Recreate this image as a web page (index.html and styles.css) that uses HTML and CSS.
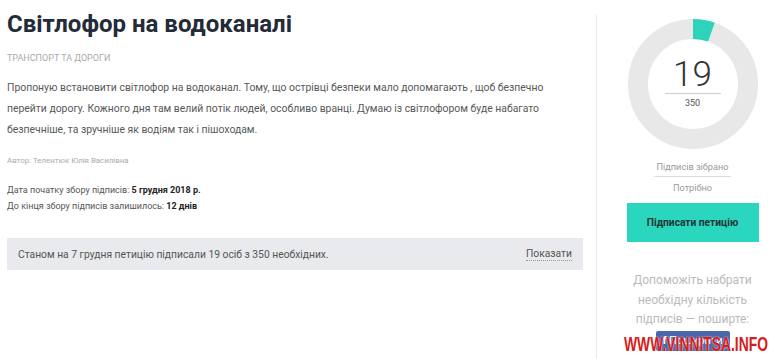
FILE: index.html
```html
<!DOCTYPE html>
<html lang="uk">
  <head>
    <meta charset="UTF-8" />
    <meta name="viewport" content="width=device-width, initial-scale=1.0" />
    <title>Світлофор на водоканалі</title>
    <link rel="stylesheet" href="styles.css">
  </head>
  <body>
    <div class="page">
      <main class="petition">
        <h1>Світлофор на водоканалі</h1>
        <div class="category">Транспорт та дороги</div>

        <p class="text">Пропоную встановити світлофор на водоканал. Тому, що острівці безпеки мало допомагають , щоб безпечно перейти дорогу. Кожного дня там велий потік людей, особливо вранці. Думаю із світлофором буде набагато безпечніше, та зручніше як водіям так і пішоходам.</p>

        <div class="author">Автор: Телентюк Юлія Василівна</div>

        <div class="dates">
          <div>Дата початку збору підписів: <b>5 грудня 2018 р.</b></div>
          <div>До кінця збору підписів залишилось: <b>12 днів</b></div>
        </div>

        <div class="status">
          <span>Станом на 7 грудня петицію підписали 19 осіб з 350 необхідних.</span>
          <a class="show" href="#">Показати</a>
        </div>
      </main>

      <aside class="sidebar">
        <div class="counter">
          <svg class="ring" width="130" height="130" viewBox="0 0 130 130">
            <circle cx="65" cy="65" r="55" fill="none" stroke="#e8e8e8" stroke-width="20"></circle>
            <!-- 19 of 350 -->
            <circle cx="65" cy="65" r="55" fill="none" stroke="#2ed3bb" stroke-width="20"
              stroke-dasharray="18.8 400" transform="rotate(-90 65 65)"></circle>
          </svg>
          <div class="count">
            <div class="count-now">19</div>
            <div class="count-need">350</div>
          </div>
        </div>

        <div class="label label-line">Підписів зібрано</div>
        <div class="label">Потрібно</div>

        <button class="sign">Підписати петицію</button>

        <p class="help">Допоможіть набрати необхідну кількість підписів — поширте:</p>

        <a class="fb" href="#"><span class="fb-f">f</span> Поширити</a>
      </aside>
    </div>

    <div class="watermark">WWW.VINNITSA.INFO</div>
  </body>
</html>
```

FILE: styles.css
```css
body {
  margin: 0;
  font-family: Roboto, "Liberation Sans", sans-serif;
  color: #555;
  background: #fff;
  overflow: hidden;
}
.page {
  display: flex;
  width: 780px;
}
.petition {
  flex: none;
  width: 576px;
  padding-left: 7px;
  margin-right: 13px;
}
h1 {
  margin: 7px 0 0;
  font-size: 24px;
  line-height: 34px;
  font-weight: 700;
  color: #242b38;
}
.category {
  margin-top: 12px;
  font-size: 9px;
  text-transform: uppercase;
  color: #aaa;
}
.text {
  margin: 14px 0 0;
  font-size: 10.4px;
  line-height: 21px;
  color: #585858;
}
.author {
  margin-top: 16px;
  font-size: 7.9px;
  color: #aaa;
}
.dates {
  margin-top: 17px;
  font-size: 9px;
  line-height: 16px;
  color: #555;
}
.dates b {
  color: #222;
}
.status {
  display: flex;
  justify-content: space-between;
  align-items: center;
  margin-top: 24px;
  height: 32px;
  padding: 0 11px;
  background: #e8eaed;
  font-size: 10.3px;
}
.show {
  color: #555;
  text-decoration: none;
  border-bottom: 1px dotted #999;
  line-height: 13px;
}
.sidebar {
  flex: none;
  width: 175px;
  margin-top: 15px;
  padding-left: 8px;
  border-left: 1px solid #e6e6e6;
  display: flex;
  flex-direction: column;
  align-items: center;
  height: 360px;
}
.counter {
  position: relative;
  margin-top: 4px;
  width: 130px;
  height: 130px;
}
.ring {
  display: block;
}
.count {
  position: absolute;
  left: 0;
  right: 0;
  top: 38px;
  display: flex;
  flex-direction: column;
  align-items: center;
}
.count-now {
  font-size: 35px;
  font-weight: 300;
  line-height: 36px;
  color: #333;
  width: 56px;
  text-align: center;
  border-bottom: 1px solid #ccc;
}
.count-need {
  margin-top: 4px;
  font-size: 9px;
  line-height: 11px;
  color: #555;
}
.label {
  font-size: 9.2px;
  color: #999;
  line-height: 13px;
}
.label-line {
  margin-top: 11px;
  padding: 0 2px 3px;
  border-bottom: 1px solid #ddd;
  margin-bottom: 4px;
}
.sign {
  margin-top: 9px;
  width: 132px;
  height: 39px;
  border: none;
  background: #2ad6be;
  color: #1f3536;
  font-family: inherit;
  font-size: 10.2px;
  font-weight: 700;
  cursor: pointer;
}
.help {
  margin: 29px 0 0;
  width: 140px;
  text-align: center;
  font-size: 12px;
  line-height: 19.5px;
  color: #bbb;
}
.fb {
  margin-top: 1px;
  width: 74px;
  height: 20px;
  border-radius: 2px;
  background: #4a67ad;
  color: #fff;
  font-size: 11px;
  line-height: 20px;
  text-align: center;
  text-decoration: none;
}
.fb-f {
  font-weight: 700;
}
.watermark {
  position: absolute;
  left: 624px;
  top: 332px;
  font-family: "Liberation Sans", sans-serif;
  font-size: 21px;
  font-weight: 700;
  color: #d71c1c;
  transform: scaleX(0.66);
  transform-origin: left top;
  text-shadow: 0 0 2px #fff;
}
```
